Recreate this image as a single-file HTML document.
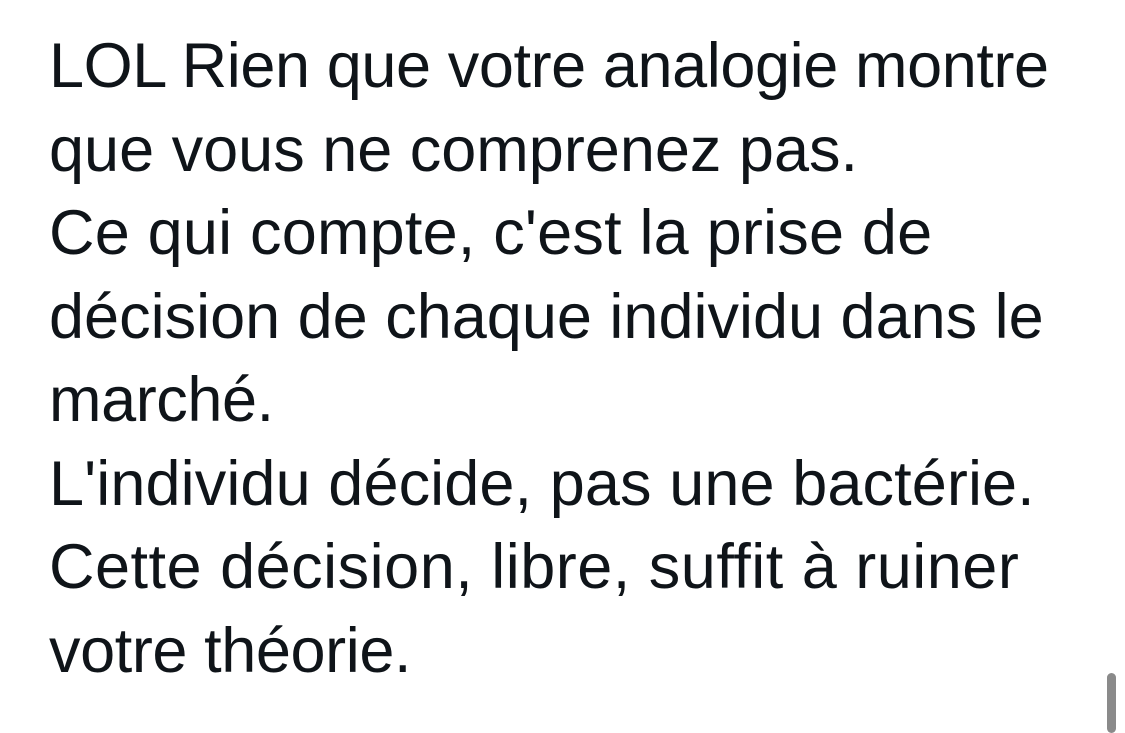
<!DOCTYPE html>
<html><head><meta charset="utf-8"><style>
html,body{margin:0;padding:0;background:#fff;width:1125px;height:728px;overflow:hidden}
.t{position:absolute;left:49px;top:25px;font-family:"Liberation Sans",Arial,sans-serif;font-size:63px;line-height:83.5px;color:#0f1419;white-space:nowrap;letter-spacing:-0.4px}
.t span{display:inline-block}
.sb{position:absolute;left:1107px;top:673px;width:9px;height:60px;background:#8a8a8a;border-radius:5px}
</style></head><body>
<div class="t">LOL Rien que votre analogie montre<br><span style="letter-spacing:0px">que vous ne comprenez pas.</span><br><span style="letter-spacing:0.2px">Ce qui compte, c'est la prise de</span><br><span style="letter-spacing:0px">décision de chaque individu dans le</span><br>marché.<br><span style="letter-spacing:0.1px">L'individu décide, pas une bactérie.</span><br><span style="letter-spacing:0.5px">Cette décision, libre, suffit à ruiner</span><br>votre théorie.</div>
<div class="sb"></div>
</body></html>
